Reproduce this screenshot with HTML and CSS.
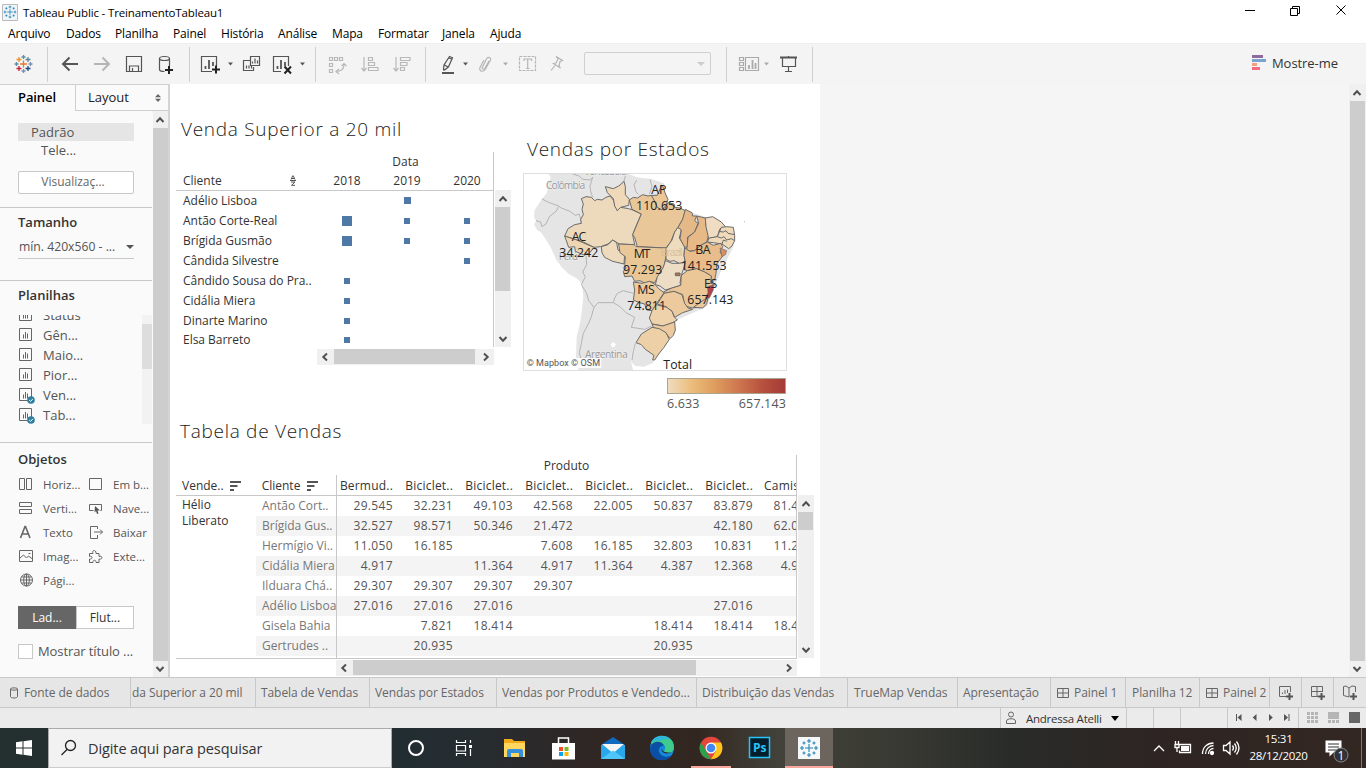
FILE: index.html
```html
<!DOCTYPE html>
<html lang="pt-BR">
<head>
<meta charset="utf-8">
<title>Tableau Public - TreinamentoTableau1</title>
<link rel="stylesheet" href="styles.css">
</head>
<body>
<svg width="0" height="0" class="defs">
  <symbol id="up" viewBox="0 0 16 16"><path d="M4.500 10 8 6.300 11.500 10" fill="none" stroke="#505050" stroke-width="2"/></symbol>
  <symbol id="down" viewBox="0 0 16 16"><path d="M4.500 6 8 9.700 11.500 6" fill="none" stroke="#505050" stroke-width="2"/></symbol>
  <symbol id="left" viewBox="0 0 16 16"><path d="M10 4.500 6.300 8 10 11.500" fill="none" stroke="#505050" stroke-width="2"/></symbol>
  <symbol id="right" viewBox="0 0 16 16"><path d="M6 4.500 9.700 8 6 11.500" fill="none" stroke="#505050" stroke-width="2"/></symbol>
  <symbol id="sheet" viewBox="0 0 15 15"><path d="M1.500 1.500h12v12h-12zM5.500 7.500v4M7.500 5v6.500M9.500 6.500v5" fill="none" stroke="#666"/></symbol>
  <symbol id="check" viewBox="0 0 8 8"><circle cx="4" cy="4" r="3.800" fill="#2f7d9f"/><path d="m2.200 4 1.400 1.400 2.300-2.600" fill="none" stroke="#fff"/></symbol>
  <symbol id="cross" viewBox="0 0 18 18"><path d="M9 5v8M5 9h8M9 0v4M7 2h4M9 14v4M7 16h4M2 7v4M0 9h4M16 7v4M14 9h4M4 2.500v3M2.500 4h3M14 2.500v3M12.500 4h3M4 12.500v3M2.500 14h3M14 12.500v3M12.500 14h3" fill="none" stroke="#2581b4" stroke-width="1.100"/></symbol>
  <symbol id="grid4" viewBox="0 0 12 12"><path d="M.500 1.500h11v9h-11zM6 1.500v9M.500 6h11" fill="none" stroke="#666"/></symbol>
  <symbol id="sortbars" viewBox="0 0 12 10"><path d="M0 1h11M0 5h7.500M0 9h4" stroke="#555" stroke-width="2"/></symbol>
</svg>

<header class="titlebar">
  <svg class="app" width="16" height="17" viewBox="0 0 16 17"><path d="M.5.500h15v16H.5z" fill="#eef4f7" stroke="#bbb"/><use href="#cross" x="1.500" y="1.500" width="13" height="13"/></svg>
  <span class="apptitle">Tableau Public - TreinamentoTableau1</span>
  <svg class="winbtns" width="110" height="20" viewBox="0 0 110 20"><g fill="none" stroke="#000"><path d="M5 8.500h10M50.500 6.500h7v7h-7zM52.500 6v-1.500h7v7H58M96.500 3.500l9 9M105.500 3.500l-9 9"/></g></svg>
</header>
<nav class="menu"><span class="m1">Arquivo</span><span class="m2">Dados</span><span class="m3">Planilha</span><span class="m4">Painel</span><span class="m5">História</span><span class="m6">Análise</span><span class="m7">Mapa</span><span class="m8">Formatar</span><span class="m9">Janela</span><span>Ajuda</span></nav>

<div class="toolbar">
  <svg class="tb" width="48" height="40" viewBox="0 45 48 40"><g fill="none" stroke-width="1.300"><path stroke="#e8762c" d="M23.500 60.500v7M20 64h7"/><path stroke="#5b8fa8" d="M23.500 55v4M21.500 57h4M16.500 62v4M14.500 64h4"/><path stroke="#7b8fb5" d="M30.500 62v4M28.500 64h4M23.500 69v4M21.500 71h4"/><path stroke="#eb9129" d="M19 57v5M16.500 59.500h5"/><path stroke="#59879b" d="M28 57v5M25.500 59.500h5"/><path stroke="#c72035" d="M19 66v5M16.500 68.500h5"/><path stroke="#1f457e" d="M28 66v5M25.500 68.500h5"/></g></svg>
  <svg class="tb" width="142" height="40" viewBox="48 45 142 40"><g fill="none" stroke="#555" stroke-width="1.200"><path d="M78 64H63M69.500 57.500 63 64l6.500 6.500" stroke-width="2"/><path d="M94 64h15M102.500 57.500 109 64l-6.500 6.500" stroke="#b5b5b5" stroke-width="2"/><path d="M126.500 56.500h15v15h-15zM129.500 71v-5h9v5M132.500 71v-3"/><ellipse cx="164.500" cy="58.500" rx="5" ry="2"/><path d="M159.500 58.500v11c0 1.500 2 2 5 2M169.500 58.500V66"/><path d="M169 66v8M165 70h8" stroke="#222" stroke-width="2"/></g></svg>
  <svg class="tb" width="126" height="40" viewBox="190 45 126 40"><g fill="none" stroke="#555" stroke-width="1.200"><path d="M212 71.500h-10.500v-15h15V66M250.500 56.500h9v9h-9zM250 60.500h-6.500v10h10V67M281 71.500h-7.500v-15h15V66"/><path d="M205.500 69v-3M209 69v-9M213 66v-4M277.500 69v-3M281 69v-9M285 66v-4" stroke-width="1.800"/><path d="M252.500 63.500v-2M255 63.500v-5M257.500 63.500v-3M246.500 68.500v-3M249 68.500v-3M251.500 68.500v-3"/><path d="M216 65.500v8M212 69.500h8" stroke="#222" stroke-width="2"/><path d="m284.500 66.500 6.500 7M291 66.500l-6.500 7" stroke="#222" stroke-width="2"/></g><path d="M228 62.500h5l-2.500 3zM300 62.500h5l-2.500 3z" fill="#555"/></svg>
  <svg class="tb" width="110" height="40" viewBox="316 45 110 40"><g fill="none" stroke="#b8b8b8" stroke-width="1.200"><path d="M329.500 57.500h3v3h-3zM334.500 57.500h3v3h-3zM339.500 57.500h3v3h-3zM329.500 63.500h3v3h-3zM329.500 69.500h3v3h-3zM336 71.500c5 0 8-2 8-7M339 69l-3 2.500 3 2.500M341.500 66l2.500-2.500 2.500 2.500"/><path d="M364 57v14M361.500 68l2.500 3 2.500-3M368.500 57.500h4v3h-4zM368.500 62.500h6v3h-6zM368.500 67.500h9.500v3h-9.500z"/><path d="M396 57v14M393.500 68l2.500 3 2.500-3M400.500 57.500h9.500v3h-9.500zM400.500 62.500h6.500v3h-6.500zM400.500 67.500h4v3h-4z"/></g></svg>
  <svg class="tb open" width="158" height="40" viewBox="426 45 158 40"><path d="M442 72h12v2h-12z" fill="#555"/><g fill="none" stroke="#555" stroke-width="1.200"><path d="m449.500 56.500 3 1.300-4 9-3.500 3-1.500-.8.500-4zM444.500 65l3.500 2M449 58l2.500 1M443 70h2"/></g><path d="M463 62.500h5l-2.500 3z" fill="#555"/><path d="M503 62.500h5l-2.500 3z" fill="#aaa"/><g fill="none" stroke="#b5b5b5" stroke-width="1.200"><path d="m489 61-4 7c-1.500 2-3.500 1-2.500-1l4-8c1.500-3 5-1 4 1l-5 9c-2.500 4-7 2-5.500-1.500l4-7.500"/><path d="M519.500 56.500h16v14h-16z" stroke-dasharray="3 1"/><path d="M524 61v-2h7.500v2M527.700 59v9M526 68.500h3.500"/><path d="m556 56.500 6.500 4-2.500 1-1 4.500 1.500 2-7-4.500 2.500-.5 2-4zM555 65.500l-4 5"/></g></svg>
  <div class="combo"><i></i></div>
  <svg class="tb" width="102" height="40" viewBox="711 45 102 40"><path d="M726.500 47v35" stroke="#cfcfcf"/><g fill="none" stroke="#aaa" stroke-width="1.200"><path d="M739.500 57.500h4v3h-4zM739.500 62.500h4v3h-4zM739.500 67.500h4v3h-4zM745.500 57.500h13v13h-13z"/><path d="M749 69v-4M752.500 69v-9M755.500 69v-6" stroke-width="1.800"/></g><path d="M764 62.500h5l-2.500 3z" fill="#aaa"/><path d="M780 57.500h17" stroke="#555" stroke-width="2" fill="none"/><path d="M782.500 58v8.500h13V58M788.500 56v2M788.500 66.500V72M785 71.500h7" fill="none" stroke="#555" stroke-width="1.200"/></svg>
  <div class="showme"><svg width="14" height="16" viewBox="0 0 14 16"><path d="M0 0h11v3H0z" fill="#8b6c9c"/><path d="M0 4h14v3H0z" fill="#7aa3cf"/><path d="M0 8h5v3H0z" fill="#f1a27c"/><path d="M0 12h8v3H0z" fill="#f76b82"/></svg><span>Mostre-me</span></div>
</div>

<main class="work">
  <aside class="side">
    <div class="sidetabs"><b>Painel</b><div><span>Layout</span><svg width="6" height="8" viewBox="0 0 6 8"><path d="M0 3.200h6L3 0zM0 4.800h6L3 8z" fill="#666"/></svg></div></div>
    <div class="sidebody">
      <div class="panel">
        <section class="dev"><p class="def">Padrão</p><p class="tele">Tele...</p><button class="preview">Visualizaç...</button></section>
        <section class="size"><h3>Tamanho</h3><div class="select"><span>mín. 420x560 - ...</span><i></i></div></section>
        <section class="sheets"><h3>Planilhas</h3>
          <div class="sheetbox"><ul>
            <li><svg class="si"><use href="#sheet" width="15" height="15"/></svg>Status</li>
            <li><svg class="si"><use href="#sheet" width="15" height="15"/></svg>Gên...</li>
            <li><svg class="si"><use href="#sheet" width="15" height="15"/></svg>Maio...</li>
            <li><svg class="si"><use href="#sheet" width="15" height="15"/></svg>Pior...</li>
            <li><svg class="si"><use href="#sheet" width="15" height="15"/><use href="#check" x="9" y="9" width="8" height="8"/></svg>Ven...</li>
            <li><svg class="si"><use href="#sheet" width="15" height="15"/><use href="#check" x="9" y="9" width="8" height="8"/></svg>Tab...</li>
          </ul><div class="mini"><i></i></div></div>
        </section>
        <section class="objs"><h3>Objetos</h3>
          <div class="objgrid">
            <svg class="oi" viewBox="0 0 16 16"><path d="M1.500 2.500h5v11h-5zM8.500 2.500h5v11h-5z"/></svg><span>Horiz...</span>
            <svg class="oi" viewBox="0 0 16 16"><path d="M1.500 2.500h12v11h-12z"/></svg><span>Em b...</span>
            <svg class="oi" viewBox="0 0 16 16"><path d="M1.500 2.500h12v4h-12zM1.500 9.500h12v4h-12z"/></svg><span>Verti...</span>
            <svg class="oi" viewBox="0 0 16 16"><path d="M5.500 10.500h-4v-6h12v6h-1"/><path d="m7 6 5 4.500H9.500l1 3-1.500.5-1-3-1.500 1.500z" fill="#555" stroke="none"/></svg><span>Nave...</span>
            <svg class="oi" viewBox="0 0 16 16"><path d="M2.500 14 7 2.500h.5L12 14M4 10h6.500" stroke-width="1.600"/></svg><span>Texto</span>
            <svg class="oi" viewBox="0 0 16 16"><path d="M9.500 5V2.500h-7v12h7V11M6 8h8.500M12 5.500 14.500 8 12 10.500"/></svg><span>Baixar</span>
            <svg class="oi" viewBox="0 0 16 16"><path d="M1.500 2.500h13v11h-13zM2 10l3.500-3 3 3 2-2 4 3M10.500 5.500h2"/></svg><span>Imag...</span>
            <svg class="oi" viewBox="0 0 16 16"><path d="M1.500 5.500h3.500c-1.500-4 3.500-4 3 0h3v3c4-1.500 4 3.500 0 2.500v3.500h-3c.500-3-3.500-3-3 0h-3.500v-3.500c3.500.5 3.500-3.500 0-2.500z"/></svg><span>Exte...</span>
            <svg class="oi" viewBox="0 0 16 16"><circle cx="8.500" cy="8" r="6"/><ellipse cx="8.500" cy="8" rx="2.800" ry="6"/><path d="M2.500 8h12M3.500 5h10M3.500 11h10M8.500 2v12"/></svg><span>Pági...</span>
          </div>
          <div class="toggle"><b>Lad...</b><span>Flut...</span></div>
          <div class="showtitle"><i></i><span>Mostrar título ...</span></div>
        </section>
      </div>
      <div class="vbar"><svg><use href="#up"/></svg><i class="g"></i><svg><use href="#down"/></svg></div>
    </div>
  </aside>

  <div class="canvas">
    <div class="toprow">
      <section class="v1">
        <h2>Venda Superior a 20 mil</h2>
        <div class="v1grid">
          <div class="v1table">
            <div class="v1head"><span class="dt">Data</span><span class="cl">Cliente</span><svg width="8" height="11" viewBox="0 0 8 11"><path d="M2 4.500 3.700.8h.6L6 4.500M2.500 3.500h3M1 5.500h6M2 7h4L2.500 10.300H6" fill="none" stroke="#555"/></svg><span class="yr">2018</span><span class="yr">2019</span><span class="yr">2020</span></div>
            <div class="r"><span>Adélio Lisboa</span><i></i><i class="a"></i><i></i></div>
            <div class="r"><span>Antão Corte-Real</span><i class="c"></i><i class="b"></i><i class="b"></i></div>
            <div class="r"><span>Brígida Gusmão</span><i class="c"></i><i class="b"></i><i class="b"></i></div>
            <div class="r"><span>Cândida Silvestre</span><i></i><i></i><i class="b"></i></div>
            <div class="r"><span>Cândido Sousa do Pra..</span><i class="b"></i><i></i><i></i></div>
            <div class="r"><span>Cidália Miera</span><i class="b"></i><i></i><i></i></div>
            <div class="r"><span>Dinarte Marino</span><i class="b"></i><i></i><i></i></div>
            <div class="r lastr"><span>Elsa Barreto</span><i class="b"></i><i></i><i></i></div>
          </div>
          <div class="vbar v1v"><svg><use href="#up"/></svg><i></i><svg><use href="#down"/></svg></div>
        </div>
        <div class="hbar v1h"><svg><use href="#left"/></svg><i></i><svg><use href="#right"/></svg></div>
      </section>

      <section class="v2">
        <h2>Vendas por Estados</h2>
        <svg class="map" width="264" height="198" viewBox="9 129 792 594">
          <path d="M10 130h790v592H10z" fill="#fff"/>
          <path d="M84 130 92 142 86 166 80 190 66 207 56 222 44 240 42 262 48 272 42 284 52 300 64 308 76 326 92 352 108 388 124 410 146 432 172 446 186 462 190 500 186 540 180 580 170 620 168 680 176 722 340 722 334 700 336 664 348 636 390 600 470 570 560 530 600 430 640 350 640 300 560 262 490 240 440 214 432 160 396 148 352 142 320 130z" fill="#e5e5e5"/>
          <path d="M336 664 348 636 402 676 400 698 372 710 346 708 334 696z" fill="#e5e5e5"/>
          <path d="M272 644l6-8 10 6-4 8-8 2z" fill="#fff"/>
          <g fill="none" stroke="#a9a9a9" stroke-width="2.500" stroke-linejoin="round">
            <path d="M66 207 88 218 116 228 124 234 150 244 166 256 178 252 184 278M116 230 108 244 88 260 78 282 66 290 62 276 48 272M158 132 178 138 188 148 210 150 218 142 210 168 212 184 218 202M318 132 312 152 304 160M350 150 342 164 348 186 356 194M390 148 396 170 388 192M198 376 200 404 188 426 196 440 184 464 200 490 206 512 222 532 234 518 280 518 284 504 292 490 310 482 340 490M280 518 300 530 318 548 344 562 334 592 376 598 394 588M222 532 214 560 206 580 190 610 184 640 178 668 184 690"/>
            <path d="M346 640 340 664 336 690"/>
          </g>
          <g class="mt"><text x="78" y="176" textLength="118">Colômbia</text><text x="192" y="135" textLength="128">Venezuela</text><text x="116" y="391" textLength="58">Perú</text><text x="195" y="683" textLength="128">Argentina</text></g>
          <g stroke="#6b6b6b" stroke-width="3" stroke-linejoin="round">
            <path fill="#edd9bb" d="M184 206 198 200 214 202 224 212 232 208 246 210 258 202 270 198 280 210 288 232 292 242 302 232 326 236 338 240 364 252 350 284 338 314 344 344 298 342 278 330 264 342 242 350 222 352 190 336 134 318 144 296 164 284 184 280 182 268 190 254 186 238 190 222z"/>
            <path fill="#efd9b9" d="M256 170 280 176 296 168 304 162 312 154 316 170 316 194 328 208 326 226 302 232 292 242 284 228 280 206 262 188z"/>
            <path fill="#efd6b2" d="M134 318 170 330 222 352 206 372 196 368 194 376 166 364 164 350 146 352z"/>
            <path fill="#eedabd" d="M244 350 264 344 278 330 290 338 294 360 314 372 312 402 278 394 254 382 246 368z"/>
            <path fill="#e9c798" d="M328 210 340 202 352 204 368 194 384 198 394 196 400 204 408 218 416 232 424 230 432 242 444 218 462 222 464 232 480 234 496 242 488 268 474 292 464 306 452 336 438 354 352 350 344 322 338 314 364 252 336 238z"/>
            <path fill="#ebc795" d="M394 196 412 196 424 168 430 172 434 186 444 208 438 226 426 240 412 232 402 210z"/>
            <path fill="#e9c796" d="M296 342 342 344 348 350 438 354 438 380 432 408 418 432 404 458 388 454 376 460 360 452 344 454 336 438 314 440 310 424 318 414 314 404 316 380 300 368z"/>
            <path fill="#efdbbe" d="M474 292 484 300 478 324 486 336 494 350 492 376 496 398 478 400 462 392 450 394 438 388 438 356 456 330 464 306z"/>
            <path fill="#e5b887" d="M496 238 516 248 518 258 530 258 524 272 534 280 524 306 502 322 504 350 494 352 480 326 484 300 474 292 488 268z"/>
            <path fill="#e6b987" d="M530 258 556 264 558 286 566 316 560 336 542 346 524 362 500 364 504 322 524 306 536 280z"/>
            <path fill="#efdcc3" d="M556 264 578 260 604 276 618 292 600 296 592 320 566 326 558 290z"/>
            <path fill="#efdab9" d="M604 292 620 290 640 292 644 316 644 332 636 348 626 356 606 342 580 338 562 336 568 324 592 320z"/>
            <path fill="none" d="M596 304 610 306 618 302 624 310 644 314M592 320 604 324 612 320 620 330 634 326 644 332M606 342 610 330 620 334"/>
            <path fill="#e8bc8b" d="M494 354 510 364 524 362 542 346 562 336 580 346 602 340 608 350 600 366 608 378 590 402 588 430 584 450 572 460 574 438 554 426 530 416 502 422 490 418 496 396 492 376z"/>
            <path fill="#d88d63" stroke-width="2" d="M600 354 620 362 616 374 606 380z"/>
            <path fill="#eeddc5" d="M436 392 456 400 478 400 496 396 490 418 484 436 480 458 482 466 456 474 436 480 420 468 406 464 412 440 430 412z"/>
            <path fill="#b97153" d="M466 429h14v8h-14z"/>
            <path fill="#ebc798" d="M484 436 502 422 530 416 554 426 574 438 572 460 584 464 566 482 562 506 550 530 518 534 494 528 488 494 462 484 434 490 430 486 456 474 482 466z"/>
            <path fill="#b0434a" stroke-width="1.500" d="M562 470 580 464 580 480 568 504 556 504 564 488z"/>
            <path fill="#ecc797" d="M554 508 564 504 560 522 548 534 520 532z"/>
            <path fill="#eccb9f" d="M340 456 366 460 388 454 404 462 416 476 432 488 420 506 410 520 396 542 380 540 374 522 358 518 340 510 344 480z"/>
            <path fill="#ecca9d" d="M432 490 462 484 486 494 494 520 504 534 518 538 488 548 464 562 456 544 438 530 412 522 422 506z"/>
            <path fill="#eed2ab" d="M396 542 408 524 440 532 456 544 462 560 472 570 458 578 430 588 396 582 388 564z"/>
            <path fill="#ecc99e" d="M396 582 428 588 464 576 466 600 460 616 450 626 438 610 400 592z"/>
            <path fill="#eed0a7" d="M396 592 418 596 438 608 448 628 432 652 416 672 404 690 398 690 402 676 376 658 364 644 348 638 364 612z"/>
          </g>
          <text x="422" y="378" class="bz" textLength="66">Brazil</text>
          <path d="M14 684h230v30H14z" fill="#fff" opacity=".85"/>
          <text x="20" y="708" class="osm" textLength="220">© Mapbox © OSM</text>
          <g class="ml">
            <text x="394" y="192" textLength="45">AP</text><text x="348" y="240" textLength="139">110.653</text>
            <text x="155" y="332" textLength="44">AC</text><text x="118" y="381" textLength="117">34.242</text>
            <text x="341" y="384" textLength="50">MT</text><text x="309" y="431" textLength="118">97.293</text>
            <text x="526" y="371" textLength="46">BA</text><text x="482" y="419" textLength="138">141.553</text>
            <text x="352" y="492" textLength="52">MS</text><text x="322" y="539" textLength="116">74.811</text>
            <text x="552" y="473" textLength="40">ES</text><text x="502" y="521" textLength="138">657.143</text>
            <text x="430" y="717" textLength="86">Total</text>
          </g>
          <circle cx="673" cy="275" r="1.500" fill="#888"/>
          <path d="M10.500 130.500h789v591h-789z" fill="none" stroke="#dedede" stroke-width="3"/>
        </svg>
        <div class="legend"><i></i><p><span>6.633</span><span>657.143</span></p></div>
      </section>
    </div>

    <section class="v3">
      <h2>Tabela de Vendas</h2>
      <div class="v3row">
        <div class="v3table">
          <div class="lefts">
            <div class="lh"><span>Vende..</span><svg width="12" height="10"><use href="#sortbars"/></svg><span class="c2">Cliente</span><svg width="12" height="10"><use href="#sortbars"/></svg></div>
            <div class="lb"><div class="seller">Hélio<br>Liberato</div><div class="names"><p>Antão Cort..</p><p>Brígida Gus..</p><p>Hermígio Vi..</p><p>Cidália Miera</p><p>Ilduara Chá..</p><p>Adélio Lisboa</p><p>Gisela Bahia</p><p>Gertrudes ..</p></div></div>
          </div>
          <div class="vals">
            <div class="prod">Produto</div>
            <div class="vr vh"><span>Bermud..</span><span>Biciclet..</span><span>Biciclet..</span><span>Biciclet..</span><span>Biciclet..</span><span>Biciclet..</span><span>Biciclet..</span><span class="cam">Camis</span></div>
            <div class="vr"><span>29.545</span><span>32.231</span><span>49.103</span><span>42.568</span><span>22.005</span><span>50.837</span><span>83.879</span><span>81.426</span></div>
            <div class="vr"><span>32.527</span><span>98.571</span><span>50.346</span><span>21.472</span><span></span><span></span><span>42.180</span><span>62.035</span></div>
            <div class="vr"><span>11.050</span><span>16.185</span><span></span><span>7.608</span><span>16.185</span><span>32.803</span><span>10.831</span><span>11.260</span></div>
            <div class="vr"><span>4.917</span><span></span><span>11.364</span><span>4.917</span><span>11.364</span><span>4.387</span><span>12.368</span><span>4.917</span></div>
            <div class="vr"><span>29.307</span><span>29.307</span><span>29.307</span><span>29.307</span><span></span><span></span><span></span><span></span></div>
            <div class="vr"><span>27.016</span><span>27.016</span><span>27.016</span><span></span><span></span><span></span><span>27.016</span><span></span></div>
            <div class="vr"><span></span><span>7.821</span><span>18.414</span><span></span><span></span><span>18.414</span><span>18.414</span><span>18.414</span></div>
            <div class="vr"><span></span><span>20.935</span><span></span><span></span><span></span><span>20.935</span><span></span><span></span></div>
          </div>
        </div>
        <div class="vbar v3v"><svg><use href="#up"/></svg><i></i><svg><use href="#down"/></svg></div>
      </div>
      <div class="hbar v3h"><svg><use href="#left"/></svg><i></i><svg><use href="#right"/></svg></div>
    </section>
  </div>
  <div class="vbar mainv"><svg><use href="#up"/></svg><i class="g"></i><svg><use href="#down"/></svg></div>
</main>

<nav class="tabs">
  <div class="t0"><svg width="10" height="12" viewBox="0 0 10 12"><path d="M1.500 2v7.500c0 2 7 2 7 0V2M1.500 2c0-1.500 7-1.500 7 0s-7 1.500-7 0" fill="none" stroke="#666"/></svg><span>Fonte de dados</span></div>
  <div class="t1">da Superior a 20 mil</div><div class="t2">Tabela de Vendas</div><div class="t3">Vendas por Estados</div><div class="t4">Vendas por Produtos e Vendedo...</div><div class="t5">Distribuição das Vendas</div><div class="t6">TrueMap Vendas</div><div class="t7">Apresentação</div>
  <div class="t8"><svg width="12" height="12"><use href="#grid4"/></svg>Painel 1</div><div class="t9">Planilha 12</div><div class="t10"><svg width="12" height="12"><use href="#grid4"/></svg>Painel 2</div>
  <div class="n1"><svg width="18" height="18" viewBox="0 0 18 18"><path d="M9 12.500H2.500v-10h11V8M5.500 10V8.500M8 10V6M10.500 9V5.500" class="ln"/><path d="M12.500 9v7M9 12.500h7" class="pl"/></svg></div>
  <div class="n2"><svg width="18" height="18" viewBox="0 0 18 18"><path d="M9 12.500H2.500v-10h11V8M8 2.500v10M2.500 7.500h11" class="ln"/><path d="M12.500 9v7M9 12.500h7" class="pl"/></svg></div>
  <div class="n3"><svg width="18" height="18" viewBox="0 0 18 18"><path d="M8 13 2.500 11.500v-9L5 2l3 2v9M8 4l3-2 3.500.5V8" class="ln"/><path d="M12.500 9v7M9 12.500h7" class="pl"/></svg></div>
</nav>
<div class="status">
  <div class="user"><svg width="12" height="14" viewBox="0 0 12 14"><circle cx="6" cy="3.500" r="2.500" fill="none" stroke="#666"/><path d="M1.500 12.500V10c0-3 9-3 9 0v2.500z" fill="none" stroke="#666"/></svg><span>Andressa Atelli</span><i></i></div>
  <div class="s1"></div><div class="s1"></div><div class="s2"></div>
  <div class="s3"><svg width="70" height="20" viewBox="1228 708 70 20"><path d="M1236 714h1v7h-1zM1241.500 714v7l-4-3.500zM1256.500 714v7l-3.800-3.500zM1269 714v7l3.800-3.500zM1284 714v7l4-3.500zM1288.500 714h1v7h-1z" fill="#555"/></svg></div>
  <svg width="67" height="20" viewBox="1299 708 67 20"><path d="M1307 712h3v3h-3zM1311 712h3v3h-3zM1315 712h3v3h-3zM1307 716h3v3h-3zM1311 716h3v3h-3zM1315 716h3v3h-3zM1307 720h3v3h-3zM1311 720h3v3h-3zM1315 720h3v3h-3zM1328 712h11v7h-11zM1328 720h3v3h-3zM1332 720h3v3h-3zM1336 720h3v3h-3z" fill="#b5b5b5"/><path d="M1349 712h11v11h-11z" fill="#666"/></svg>
</div>

<footer class="taskbar">
  <svg class="win" width="48" height="40" viewBox="0 728 48 40"><path d="M16 742.300l6.500-1v6.200H16zM23.500 741.200l8.500-1.200v7.500h-8.500zM16 748.500h6.500v6.200l-6.500-1zM23.500 748.500H32v7.500l-8.500-1.200z" fill="#fff"/></svg>
  <div class="search"><svg width="18" height="18" viewBox="0 0 18 18"><circle cx="10.500" cy="6.500" r="5" fill="none" stroke="#222" stroke-width="1.300"/><path d="m7 10.500-5.500 5.500" stroke="#222" stroke-width="1.300"/></svg><span>Digite aqui para pesquisar</span></div>
  <svg width="393" height="40" viewBox="392 728 393 40">
    <circle cx="416" cy="748" r="7" fill="none" stroke="#fff" stroke-width="2"/>
    <path d="M456.500 740v2.500h9V740M456.500 756v-2.500h9V756M456.500 745.500h9v5.500h-9zM470.500 740v3M470.500 749v7" fill="none" stroke="#fff" stroke-width="1.200"/><path d="M469 745h3v3h-3z" fill="#fff"/>
    <path d="M504 739h8l2 2h11v16h-21z" fill="#f2a91c"/><path d="M504 743h21v14h-21z" fill="#ffd75e"/><path d="M507 757v-6q0-2 2-2h12q2 0 2 2v6h-4v-4h-8v4z" fill="#3591dc"/>
    <path d="M558.500 744v-6h10v6" fill="none" stroke="#fff" stroke-width="1.500"/><path d="M552 743h23v16.500h-23z" fill="#fff"/><path d="M559 747h4v4h-4z" fill="#ee4f25"/><path d="M564.500 747h4v4h-4z" fill="#7db928"/><path d="M559 752h4v4h-4z" fill="#08a4e9"/><path d="M564.500 752h4v4h-4z" fill="#ffb900"/>
    <path d="m601 745 12-8 12 8v3h-24z" fill="#0f6abf"/><path d="M601 745h24v14h-24z" fill="#28a8ea"/><path d="M602 744h22l-9.500 8h-3z" fill="#f5f5f5"/><path d="m601 759 12-8.500 12 8.500z" fill="#50c5fa"/>
    <circle cx="662" cy="748" r="12" fill="#1688d8"/><path d="M651 744c2-11 23-11 23 3 0 7-8 7-10 4 3-4 0-8-5-8-4 0-7 1-8 1z" fill="#3ecb8b"/><path d="M651 743c3-9 16-9 20-3-5-2-9-1-11 1-3-1-7 0-9 2z" fill="#2fb6dc"/><path d="M650 749c0-8 12-10 14-3-3-1-6 2-5 6 2 5 9 6 13 3-6 9-22 6-22-6z" fill="#0b4fa5"/><path d="M662 745c-3 5 3 9 9 7-6 4-12-1-9-7z" fill="#2b2926"/>
    <circle cx="711" cy="748" r="11.300" fill="#e5463b"/><path d="m701 742.500 6.500 11 3.500 5.800a11.300 11.300 0 0 1-10-16.800z" fill="#2da04c"/><path d="M711 742.500h10a11.300 11.300 0 0 1-10 16.800l5-8.500z" fill="#fbc51c"/><circle cx="711" cy="748" r="5.500" fill="#fff"/><circle cx="711" cy="748" r="4.300" fill="#4387f2"/><path d="M691 766h40v2h-40z" fill="#f7a79b"/>
    <path d="M749.500 737.500h20v20h-20z" fill="#061e2c" stroke="#26c4f9" stroke-width="1.500"/><text x="753" y="752" class="ps">Ps</text>
  </svg>
  <div class="tabtask"><svg width="22" height="22" viewBox="0 0 22 22"><path d="M0 0h22v22H0z" fill="#f4f8fa"/><use href="#cross" x="2" y="2" width="18" height="18"/></svg></div>
  <svg class="tray" width="100" height="40" viewBox="1145 728 100 40"><g fill="none" stroke="#fff" stroke-width="1.300"><path d="m1154 751 5-5 5 5M1179.500 744.500h11v8h-11v-2M1175.500 741v3M1178.500 741v3M1175 744.500h4v3h-4zM1177 748v4"/><path d="M1181 746h8v5h-8z" fill="#fff" stroke="none"/><path d="M1202.500 754c0-7 5-11 11-11M1205.500 754c0-5 4-8.500 8-8.500M1208.500 754c0-3 2-5.500 5-5.500" /><circle cx="1212" cy="753" r="1.500" fill="#fff"/><path d="M1223.500 745.500h2.500l4-3.500v12l-4-3.500h-2.500zM1232.500 745.500q2 2.500 0 5M1234.500 743.500q3.500 4.500 0 9M1236.500 741.500q5 6.500 0 13"/></g></svg>
  <div class="clock"><span class="hr">15:31</span><span>28/12/2020</span></div>
  <svg class="notif" width="46" height="40" viewBox="1320 728 46 40"><path d="M1325.500 740.500h16v12h-8l-4 4v-4h-4z" fill="#fff"/><path d="M1328 744h11M1328 747h11M1328 750h8" stroke="#333"/><circle cx="1341" cy="755" r="7" fill="#333" stroke="#888"/><text x="1337.500" y="759.500" class="one">1</text><path d="M1361.500 728v40" stroke="#777"/></svg>
</footer>
</body>
</html>
```
FILE: styles.css
```css
*{box-sizing:border-box}
body{margin:0;width:1366px;height:768px;overflow:hidden;background:#fff;display:flex;flex-direction:column;font:12px "Open Sans","Noto Sans",sans-serif;color:#333}
h2,h3,p,ul{margin:0;padding:0;font-weight:400}
svg{display:block;flex:none}
.defs{position:absolute}
span{white-space:nowrap}
.titlebar{height:24px;display:flex;align-items:center;padding-left:2px;color:#000;flex:none}
.apptitle{margin-left:5px;font-size:11.500px;letter-spacing:-.15px}
.winbtns{margin-left:auto;margin-right:16px}
.menu{height:19px;flex:none;display:flex;padding-left:8px;line-height:20px;color:#000;letter-spacing:-.15px}
.m1{width:58px}.m2{width:49px}.m3{width:58px}.m4{width:48px}.m5{width:57px}.m6{width:54px}.m7{width:46px}.m8{width:64px}.m9{width:48px}
.toolbar{height:41px;flex:none;background:#f4f4f4;display:flex;padding-top:1px;border-top:1px solid #eee}
.tb{height:40px;background:linear-gradient(#cfcfcf,#cfcfcf) right 2px/1px 35px no-repeat}
.tb.open{background:none}
.combo{width:127px;height:23px;border:1px solid #cfcfcf;border-radius:2px;margin-top:7px;display:flex;justify-content:flex-end;align-items:center;padding-right:5px}
.combo i{border:4px solid transparent;border-top:4px solid #ccc;border-bottom:0}
.showme{margin-left:auto;display:flex;align-items:center;gap:6px;padding-right:28px;font-size:13px;height:36px;letter-spacing:-.05px}
.work{height:593px;flex:none;display:flex;background:#f5f5f5}
.side{width:170px;background:#fafafa;border-right:2px solid #d4d4d4;display:flex;flex-direction:column}
.sidetabs{height:27px;border-top:1px solid #cfcfcf;display:flex;font-size:13px;line-height:25px;color:#222}
.sidetabs b{width:75px;padding-left:18px;color:#000;font-weight:600;letter-spacing:-.1px}
.sidetabs div{flex:1;border-left:1px solid #cfcfcf;border-bottom:1px solid #cfcfcf;padding:0 7px 0 12px;display:flex;justify-content:space-between;align-items:center}
.sidebody{display:flex;flex:1}
.panel{width:153px;padding-right:1px}
.panel section{border-bottom:1px solid #c8c8c8}
.panel h3{font-size:13px;font-weight:600;color:#333;line-height:18px;padding-left:18px}
.dev{height:97px;padding:12px 0 0 18px;font-size:13px;color:#555}
.def{background:#e5e5e5;width:116px;height:18px;line-height:18px;padding-left:13px}
.tele{height:18px;line-height:18px;padding-left:23px}
.preview{display:block;width:116px;height:23px;margin-top:12px;border:1px solid #c8c8c8;border-radius:2px;background:#fff;font:12px "Open Sans";color:#666;padding:0 6px 2px 0}
.size{height:73px;padding-top:5px}
.select{margin:5px 0 0 18px;width:116px;height:23px;border-bottom:1px solid #c8c8c8;display:flex;align-items:center;justify-content:space-between;font-size:12.200px;padding:0 0 1px 1px;color:#555}
.select i{border:4px solid transparent;border-top-color:#555;border-bottom:0}
.sheets{height:165px;padding-top:5px}
.size+.sheets{height:162px;position:static}
.sheetbox{height:109px;margin-top:11px;display:flex;overflow:hidden}
.sheets ul{flex:1;list-style:none;margin-top:-10px}
.sheets li{height:20px;display:flex;align-items:center;padding-left:18px;font-size:13px;color:#555}
.si{width:17px;height:17px;margin-right:8px}
.mini{width:10px;background:#f2f2f2;padding-top:9px}
.mini i{display:block;height:45px;background:#ddd}
.panel section.objs{border:0;padding-top:7px}
.objgrid{display:grid;grid-template-columns:25px 45px 25px 40px;grid-auto-rows:24px;align-items:center;padding-left:18px;margin-top:4px;font-size:11.500px;color:#555}
.oi{width:16px;height:16px;fill:none;stroke:#666;stroke-width:1}
.toggle{display:flex;margin:14px 0 0 18px;width:116px;height:23px;line-height:23px;font-size:12px;text-align:center}
.toggle b{width:58px;font-weight:400;background:#666;color:#fff}
.toggle span{flex:1;border:1px solid #c8c8c8;background:#fff;line-height:21px}
.showtitle{display:flex;align-items:center;margin:14px 0 0 18px;font-size:13px;gap:5px;color:#555;height:16px;letter-spacing:-.1px}
.showtitle i{width:15px;height:15px;border:1px solid #c8c8c8;background:#fff}
.vbar{width:16px;background:#f0f0f0;display:flex;flex-direction:column}
.vbar svg,.hbar svg{width:16px;height:16px}
.vbar svg:first-child{margin-top:1px}
.vbar i{width:15px;background:#cdcdcd}.vbar .g{flex:1}
.side .vbar svg,.mainv svg{margin-left:-1px}
.mainv{margin-left:auto;background:#f0f0f0;width:17px;padding-left:1px}
.hbar{height:16px;background:#f0f0f0;display:flex}
.hbar i{background:#cdcdcd;height:15px}
.canvas{width:650px;background:#fff;padding-left:6px;display:flex;flex-direction:column}
.canvas h2{font-size:19px;font-weight:300;color:#222;line-height:26px;letter-spacing:.72px}
.toprow{display:flex;height:326px}
.v1{width:347px;padding-top:32px}
.v1 h2{padding-left:5px}
.v1grid{display:flex;margin-top:10px}
.v1table{width:318px;height:195px;border-right:1px solid #c8c8c8;margin-right:1px;color:#333}
.v1head{height:39px;border-bottom:1px solid #c8c8c8;display:grid;grid-template-columns:112px 29px 60px 60px 60px;grid-template-rows:19px 19px;align-items:center;line-height:19px}
.dt{grid-column:4;text-align:center;padding-right:3px}
.cl{grid-row:2;grid-column:1;padding-left:7px}
.v1head svg{grid-row:2;grid-column:2;margin-left:1px}
.yr{grid-row:2;text-align:center}
.r{height:20px;display:grid;grid-template-columns:141px 60px 60px 60px;align-items:center;justify-items:center;line-height:20px}
.r.lastr{height:17px;line-height:18px}
.r span{padding-left:7px;justify-self:start;letter-spacing:-.02px}
.r i{background:#4e79a7;margin-bottom:1px}
.a{width:7px;height:7px}.b{width:6px;height:6px}.c{width:10px;height:10px}
.v1v{margin:38px 0 0;height:157px}
.v1v i{height:84px;margin-bottom:auto}
.v1h{width:177px;margin:2px 0 0 141px}
.v1h i{width:141px;margin-left:1px}.v1h svg:last-child{margin-left:auto}
.v2{width:267px;padding-top:52px}
.v2 h2{padding-left:4px}
.map{margin-top:11px}
.map text{font-family:"Open Sans"}
.mt text{font-size:31px;fill:#999;stroke:#eee;stroke-width:4;paint-order:stroke}
.bz{font-size:31px;fill:#d9bd94}
.map .osm{font-size:27px;fill:#555;font-family:Roboto}
.ml text{font-size:37px;fill:#222}
.legend{margin:7px 0 0 144px;width:119px}
.legend i{display:block;height:16px;border:1px solid #aaa591;background:linear-gradient(90deg,#f0dcc0,#ebbd7c 20%,#e0a05f 38%,#ce7750 60%,#b8523e 80%,#a63a38)}
.legend p{display:flex;justify-content:space-between;line-height:19px;font-size:12.500px;color:#555;letter-spacing:.15px}
.v3{padding-top:8px}
.v3 h2{padding-left:4px}
.v3row{display:flex;margin-top:11px}
.v3table{width:621px;height:204px;border-bottom:1px solid #c8c8c8;border-right:1px solid #c8c8c8;display:flex;margin-right:1px}
.lefts{width:161px;border-right:1px solid #c8c8c8;margin-top:20px}
.lh{height:21px;border-bottom:1px solid #c8c8c8;display:flex;align-items:center;padding-left:6px;font-size:12px;padding-top:1px}
.lh svg{margin-left:6px}.c2{margin-left:20px;margin-right:1px}
.lb{display:flex}
.seller{width:80px;padding-left:6px;line-height:16px;padding-top:1px;font-size:12px}
.names{width:80px;overflow:hidden;color:#777}
.names p{height:20px;line-height:20px;padding-left:6px;white-space:nowrap}
.names p:nth-child(even){background:#f4f4f4}
.vals{width:459px;overflow:hidden;color:#555}
.prod{height:20px;line-height:22px;text-align:center;color:#333}
.vr{display:grid;grid-template-columns:repeat(8,60px);height:20px;line-height:20px;text-align:right;width:480px;letter-spacing:.35px}
.vr span{padding-right:4px}
.vals .vr:nth-child(even){background:#f4f4f4}
.vals .vr.vh{background:#fff;height:21px;line-height:22px;border-bottom:1px solid #c8c8c8;color:#333;letter-spacing:.2px}
.vh .cam{text-align:left;padding-left:7px}
.v3v{margin-top:40px;height:163px}
.v3v i{height:18px;margin-bottom:auto}
.v3h{margin:1px 0 0 160px;width:461px}
.v3h i{width:343px;margin-left:1px}.v3h svg:last-child{margin-left:auto}
.tabs{height:31px;flex:none;display:flex;border-top:1px solid #c8c8c8;border-bottom:1px solid #c8c8c8;background:#e6e6e6;color:#666;line-height:30px;white-space:nowrap;letter-spacing:-.08px}
.tabs>div{border-right:1px solid #c8c8c8;overflow:hidden;display:flex;align-items:center;padding-left:6px;flex:none}
.tabs .t0{width:131px;padding-left:9px;gap:5px}.tabs .t1{width:125px;padding-left:1px}.tabs .t2{width:114px;padding-left:5px}.tabs .t3{width:127px;padding-left:5px}.tabs .t4{width:200px;padding-left:5px}.tabs .t5{width:151px;padding-left:5px}.t6{width:110px}.tabs .t7{width:93px;padding-left:5px}.tabs .t8{width:75px;gap:5px}.t9{width:74px}.tabs .t10{width:70px;gap:5px}
.tabs .n1,.tabs .n2,.tabs .n3{width:32px;padding-left:7px}.tabs .n3{border:0}
.ln{fill:none;stroke:#666}.pl{stroke:#555;stroke-width:2}
.status{height:20px;flex:none;background:#ebebeb;display:flex;justify-content:flex-end;font-size:11.500px}
.status>div{border-right:1px solid #c8c8c8}
.status .user{width:127px;border-left:1px solid #c8c8c8;display:flex;align-items:center;padding-left:4px;gap:9px;letter-spacing:-.25px}
.user i{border:4px solid transparent;border-top:5px solid #000;border-bottom:0}
.s1{width:27px}.s2{width:47px}.s3{width:71px}
.taskbar{height:40px;flex:none;display:flex;background:linear-gradient(90deg,#24302f,#222d32 30%,#262c30 35%,#302624 44%,#322720 51%,#42423a 57%,#383932 66%,#292b29 74%,#2d2523 84%,#332722)}
.search{width:344px;background:#f2f2f2;border:1px solid #aaa;border-bottom-color:#ccc;display:flex;align-items:center;padding-left:11px;gap:10px;font-size:14.500px;letter-spacing:-.1px}
.ps{font:bold 12px "Open Sans";fill:#26c4f9}
.tabtask{width:48px;background:#6c655e;border-bottom:2px solid #f7a79b;display:flex;align-items:center;justify-content:center;padding-top:2px}
.tray{margin-left:auto}
.clock{width:75px;color:#fff;font-size:11.500px;display:flex;flex-direction:column;align-items:center;line-height:17px;padding-top:3px;letter-spacing:-.3px;padding-right:8px}
.hr{margin-top:-1px}
.one{font:12px "Open Sans";fill:#fff}
```
